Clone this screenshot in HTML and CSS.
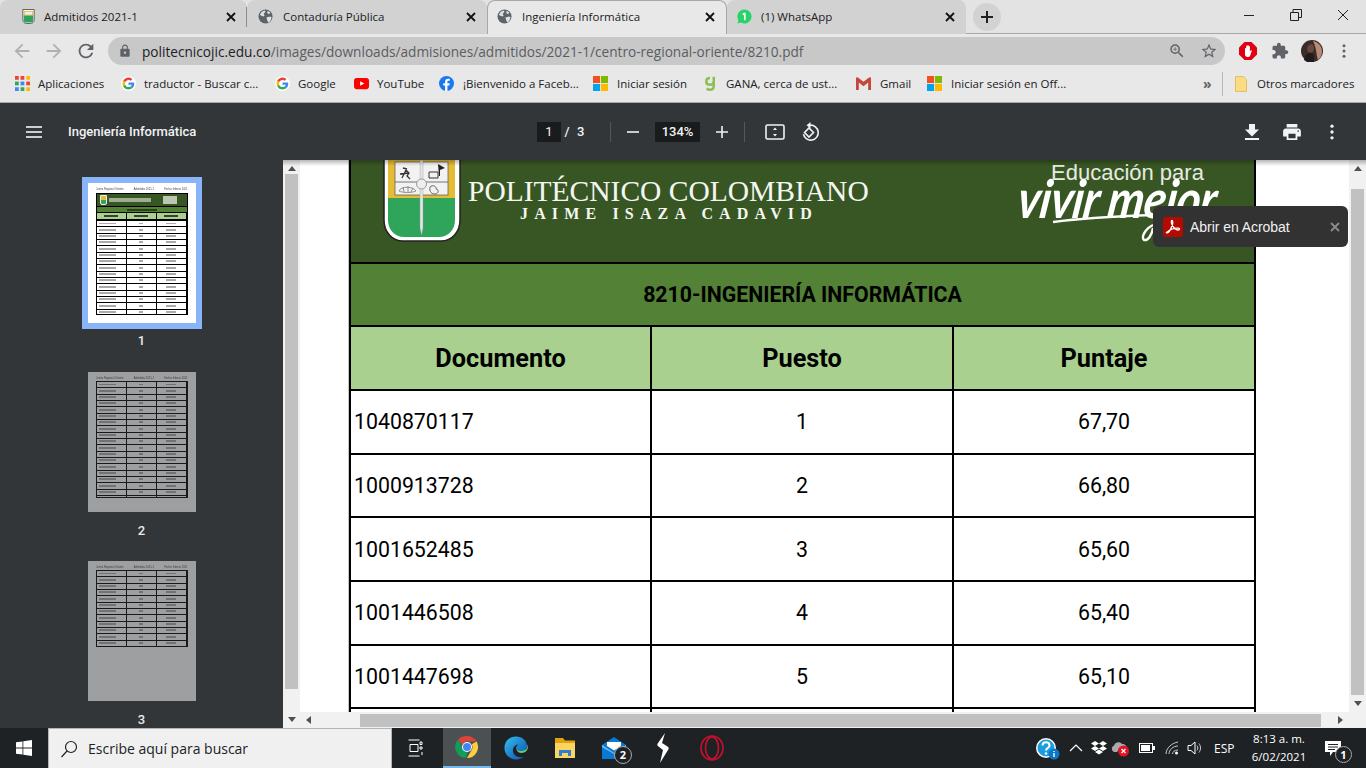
FILE: index.html
```html
<!DOCTYPE html>
<html lang="es">
<head>
<meta charset="UTF-8">
<title>Ingeniería Informática</title>
<link rel="stylesheet" href="styles.css">
</head>
<body>

<svg class="defs" width="0" height="0">
  <symbol id="globe" viewBox="0 0 16 16">
    <circle cx="8" cy="8" r="7.5" fill="#5f6368"/>
    <path fill="#dfe1e5" d="M2 6l2-3 3-1.5 1 1.5-2 2 1 2-1 1-3-1zM9 9l4-1 1.5 1-1.5 4-2 1.500-1-2zM10 2l3 1.500-1 2-2-1z"/>
  </symbol>
  <symbol id="g" viewBox="-6 -6 60 60">
    <circle cx="24" cy="24" r="30" fill="#fff"/>
    <path fill="#EA4335" d="M24 9.500c3.540 0 6.710 1.220 9.210 3.600l6.850-6.850C35.900 2.380 30.470 0 24 0 14.620 0 6.510 5.380 2.560 13.220l7.980 6.190C12.430 13.720 17.740 9.500 24 9.500z"/>
    <path fill="#4285F4" d="M46.980 24.550c0-1.570-.15-3.090-.38-4.550H24v9.020h12.940c-.58 2.960-2.260 5.480-4.780 7.180l7.730 6c4.510-4.180 7.090-10.360 7.090-17.650z"/>
    <path fill="#FBBC05" d="M10.530 28.590c-.48-1.450-.76-2.990-.76-4.590s.27-3.140.76-4.590l-7.980-6.190C.92 16.460 0 20.120 0 24c0 3.880.92 7.540 2.560 10.780l7.970-6.190z"/>
    <path fill="#34A853" d="M24 48c6.480 0 11.930-2.130 15.890-5.810l-7.730-6c-2.150 1.450-4.920 2.300-8.160 2.300-6.260 0-11.570-4.220-13.470-9.910l-7.980 6.190C6.510 42.620 14.620 48 24 48z"/>
  </symbol>
  <symbol id="ms" viewBox="0 0 16 16">
    <rect width="7.500" height="7.500" fill="#f25022"/>
    <rect x="8.500" width="7.500" height="7.500" fill="#7fba00"/>
    <rect y="8.500" width="7.500" height="7.500" fill="#00a4ef"/>
    <rect x="8.500" y="8.500" width="7.500" height="7.500" fill="#ffb900"/>
  </symbol>
  <symbol id="vert" viewBox="0 0 24 24">
    <circle cx="12" cy="5" r="2"/><circle cx="12" cy="12" r="2"/><circle cx="12" cy="19" r="2"/>
  </symbol>
  <symbol id="cross" viewBox="0 0 10 10">
    <path d="M1 1l8 8M9 1l-8 8" fill="none" stroke="currentColor" stroke-width="1.800"/>
  </symbol>
</svg>

<div class="tabstrip">
  <div class="tab tab-first">
    <svg class="favicon" viewBox="0 0 16 16">
      <path fill="#fff" stroke="#555" d="M2 .5h12v11c0 2.500-2 4-4 4H6c-2 0-4-1.500-4-4z"/>
      <rect x="3" y="2" width="10" height="5" fill="#e3bb3a"/>
      <path fill="#2fa35a" d="M3 7h10v5c0 1.500-1 2.500-3 2.500H6c-2 0-3-1-3-2.500z"/>
      <rect x="4" y="3" width="8" height="3" fill="#eee"/>
    </svg>
    <span class="tab-title">Admitidos 2021-1</span>
    <svg class="tab-x"><use href="#cross"/></svg>
  </div>
  <div class="tab">
    <svg class="favicon"><use href="#globe"/></svg>
    <span class="tab-title">Contaduría Pública</span>
    <svg class="tab-x"><use href="#cross"/></svg>
  </div>
  <div class="tab tab-active">
    <svg class="favicon"><use href="#globe"/></svg>
    <span class="tab-title">Ingeniería Informática</span>
    <svg class="tab-x"><use href="#cross"/></svg>
  </div>
  <div class="tab tab-last">
    <svg class="favicon" viewBox="0 0 16 16">
      <path fill="#25d366" d="M8 .5a7.500 7.500 0 1 1-3.700 14L.5 15.500l1.100-3.600A7.500 7.500 0 0 1 8 .5z"/>
      <path fill="#fff" d="M7 4h2.200v8H7.400V6.100L6 6.600V5z"/>
    </svg>
    <span class="tab-title">(1) WhatsApp</span>
    <svg class="tab-x"><use href="#cross"/></svg>
  </div>
  <div class="newtab">
    <svg width="14" height="14" viewBox="0 0 14 14"><path d="M7 1v12M1 7h12" stroke="#202124" stroke-width="2"/></svg>
  </div>
  <div class="winctl">
    <svg width="12" height="12" viewBox="0 0 12 12"><path d="M1 6.500h10" stroke="#222"/></svg>
    <svg width="12" height="12" viewBox="0 0 12 12"><path d="M.5 3.500h8v8h-8zM3 3.500V.5h8.500v8H8.500" fill="none" stroke="#222"/></svg>
    <svg width="12" height="12" viewBox="0 0 12 12"><path d="M1 1l10 10M11 1L1 11" stroke="#222"/></svg>
  </div>
</div>

<div class="toolbar">
  <svg class="navicon dim" viewBox="0 0 24 24"><path d="M20 11H7.830l5.590-5.590L12 4l-8 8 8 8 1.410-1.410L7.830 13H20v-2z"/></svg>
  <svg class="navicon dim" viewBox="0 0 24 24"><path d="M12 4l-1.410 1.410L16.170 11H4v2h12.170l-5.580 5.590L12 20l8-8z"/></svg>
  <svg class="navicon" viewBox="0 0 24 24"><path d="M17.650 6.350C16.200 4.900 14.210 4 12 4c-4.420 0-7.990 3.580-7.990 8s3.570 8 7.990 8c3.730 0 6.840-2.550 7.730-6h-2.080c-.82 2.330-3.040 4-5.650 4-3.310 0-6-2.690-6-6s2.690-6 6-6c1.660 0 3.140.69 4.220 1.780L13 11h7V4l-2.350 2.350z"/></svg>
  <div class="omnibox">
    <svg class="lock" viewBox="0 0 24 24"><path d="M18 8h-1V6c0-2.760-2.240-5-5-5S7 3.240 7 6v2H6c-1.100 0-2 .9-2 2v10c0 1.100.9 2 2 2h12c1.100 0 2-.9 2-2V10c0-1.100-.9-2-2-2zm-6 9c-1.100 0-2-.9-2-2s.9-2 2-2 2 .9 2 2-.9 2-2 2zm3.100-9H8.900V6c0-1.710 1.390-3.100 3.100-3.100 1.710 0 3.100 1.390 3.100 3.100v2z"/></svg>
    <span class="url"><b>politecnicojic.edu.co</b>/images/downloads/admisiones/admitidos/2021-1/centro-regional-oriente/8210.pdf</span>
    <svg class="omni-icon" viewBox="0 0 24 24"><path d="M15.500 14h-.79l-.28-.27A6.470 6.470 0 0 0 16 9.500 6.500 6.500 0 1 0 9.500 16c1.610 0 3.090-.59 4.230-1.570l.27.28v.79l5 4.990L20.490 19l-4.990-5zm-6 0C7.010 14 5 11.990 5 9.500S7.010 5 9.500 5 14 7.010 14 9.500 11.990 14 9.500 14z"/><path d="M9 7h1v2h2v1h-2v2H9v-2H7V9h2z"/></svg>
    <svg class="omni-icon" viewBox="0 0 24 24"><path d="M22 9.240l-7.190-.62L12 2 9.190 8.630 2 9.240l5.460 4.730L5.820 21 12 17.270 18.180 21l-1.630-7.030L22 9.240zM12 15.400l-3.760 2.270 1-4.280-3.320-2.880 4.380-.38L12 6.100l1.710 4.040 4.380.38-3.320 2.880 1 4.280L12 15.400z"/></svg>
  </div>
  <svg class="ext ext-block" viewBox="0 0 18 18">
    <path fill="#e0000f" d="M5.500 0h7L18 5.500v7L12.500 18h-7L0 12.500v-7z"/>
    <path fill="#fff" d="M6 6.500c0-.8 1.200-.8 1.200 0V4.200c0-.9 1.200-.9 1.200 0V3.700c0-.9 1.300-.9 1.300 0v.8c0-.8 1.200-.8 1.200 0v5l.8-1c.6-.6 1.400 0 1 .7L11 14c-.4.600-1 1-1.800 1H8.500C7 15 6 14 6 12.500z"/>
  </svg>
  <svg class="ext ext-puzzle" viewBox="0 0 24 24"><path d="M20.500 11H19V7c0-1.100-.9-2-2-2h-4V3.500C13 2.120 11.880 1 10.500 1S8 2.120 8 3.500V5H4c-1.100 0-1.990.9-1.990 2v3.800H3.500c1.490 0 2.700 1.210 2.700 2.700s-1.210 2.700-2.700 2.700H2V20c0 1.100.9 2 2 2h3.800v-1.500c0-1.490 1.210-2.700 2.700-2.700 1.490 0 2.700 1.210 2.700 2.700V22H17c1.100 0 2-.9 2-2v-4h1.500c1.380 0 2.500-1.120 2.500-2.500S21.880 11 20.500 11z"/></svg>
  <svg class="ext ext-avatar" viewBox="0 0 22 22">
    <circle cx="11" cy="11" r="11" fill="#3c2c28"/>
    <path fill="#b98a78" d="M12 1c5 1 9 5 9 10s-2 7-4 9c-2-5-1-11-5-19z"/>
    <path fill="#6a4a40" d="M7 6c3-3 6-2 6 2s-2 5-4 5-4-4-2-7z"/>
    <path fill="#201a18" d="M3 20c1-6 5-8 8-7 2 1 2 5 2 9H6z"/>
  </svg>
  <svg class="ext ext-more"><use href="#vert"/></svg>
</div>

<div class="bookmarks">
  <div class="bm">
    <svg class="bm-icon" viewBox="0 0 14 14">
      <rect width="3.500" height="3.500" fill="#ea4335"/><rect x="5.200" width="3.500" height="3.500" fill="#ea4335"/><rect x="10.500" width="3.500" height="3.500" fill="#fbbc05"/>
      <rect y="5.200" width="3.500" height="3.500" fill="#34a853"/><rect x="5.200" y="5.200" width="3.500" height="3.500" fill="#4285f4"/><rect x="10.500" y="5.200" width="3.500" height="3.500" fill="#ea4335"/>
      <rect y="10.500" width="3.500" height="3.500" fill="#4285f4"/><rect x="5.200" y="10.500" width="3.500" height="3.500" fill="#34a853"/><rect x="10.500" y="10.500" width="3.500" height="3.500" fill="#fbbc05"/>
    </svg>
    <span>Aplicaciones</span>
  </div>
  <div class="bm"><svg class="bm-icon"><use href="#g"/></svg><span>traductor - Buscar c...</span></div>
  <div class="bm"><svg class="bm-icon"><use href="#g"/></svg><span>Google</span></div>
  <div class="bm">
    <svg class="bm-icon" viewBox="0 0 16 16"><rect y="2" width="16" height="12" rx="3" fill="#f00"/><path d="M6.500 5.500v5L11 8z" fill="#fff"/></svg>
    <span>YouTube</span>
  </div>
  <div class="bm bm-far">
    <svg class="bm-icon" viewBox="0 0 16 16"><circle cx="8" cy="8" r="8" fill="#1877f2"/><path fill="#fff" d="M9 16V10h2l.4-2.400H9V6.200c0-.8.3-1.200 1.200-1.200h1.300V3c-.5-.1-1.100-.2-1.800-.2-2 0-3.200 1.200-3.200 3.200v1.600H4.500V10h2v6z"/></svg>
    <span>¡Bienvenido a Faceb...</span>
  </div>
  <div class="bm bm-far"><svg class="bm-icon"><use href="#ms"/></svg><span>Iniciar sesión</span></div>
  <div class="bm bm-gana">
    <svg class="bm-icon" viewBox="0 0 14 18"><path d="M11.500 1v11c0 3-2 4.500-4.500 4.500-1.500 0-3-.5-4-1.500M7 2.500c-2.500 0-4.500 1.500-4.500 4s2 4 4.500 4 4.500-1.500 4.500-4" fill="none" stroke="#8cc152" stroke-width="3"/></svg>
    <span>GANA, cerca de ust...</span>
  </div>
  <div class="bm bm-far">
    <svg class="bm-icon" viewBox="0 0 16 14"><path fill="#c5463a" d="M0 1.500C0 .5 1.200 0 2 .6L8 5.200 14 .6c.8-.6 2-.1 2 .9V14h-3V6L8 9.800 3 6v8H0z"/></svg>
    <span>Gmail</span>
  </div>
  <div class="bm bm-far"><svg class="bm-icon"><use href="#ms"/></svg><span>Iniciar sesión en Off...</span></div>
  <div class="bm-more">»</div>
  <div class="bm bm-other">
    <svg class="bm-icon" viewBox="0 0 12 16"><path fill="#fbdc84" stroke="#e0c060" d="M.5.5h8l3 3v12H.5z"/></svg>
    <span>Otros marcadores</span>
  </div>
</div>

<div class="pdfbar">
  <svg class="pdf-menu" viewBox="0 0 16 12"><path d="M0 1h16M0 6h16M0 11h16" stroke="#fff" stroke-width="1.600"/></svg>
  <span class="pdf-title">Ingeniería Informática</span>
  <span class="pdf-box pdf-page">1</span>
  <span class="pdf-sep-text">/</span>
  <span class="pdf-total">3</span>
  <span class="pdf-div pdf-div-a"></span>
  <svg class="pdf-minus" viewBox="0 0 12 12"><path d="M0 6h12" stroke="#f1f3f4" stroke-width="1.600"/></svg>
  <span class="pdf-box pdf-zoom">134%</span>
  <svg class="pdf-plus" viewBox="0 0 12 12"><path d="M0 6h12M6 0v12" stroke="#f1f3f4" stroke-width="1.600"/></svg>
  <span class="pdf-div pdf-div-b"></span>
  <svg class="pdf-fit" viewBox="0 0 20 16">
    <rect x="1" y="1" width="18" height="14" rx="1.500" fill="none" stroke="#f1f3f4" stroke-width="1.600"/>
    <path fill="#f1f3f4" d="M10 3.500l2 2.500H8zM10 12.500L8 10h4z"/>
  </svg>
  <svg class="pdf-rotate" viewBox="0 0 20 20">
    <path d="M9 3.200a7.500 7.500 0 1 1-6.600 9" fill="none" stroke="#f1f3f4" stroke-width="1.600"/>
    <path fill="#f1f3f4" d="M9.500 0v6.400L5.500 3.200z"/>
    <path d="M3.500 10.500l4.500-4.500 4.500 4.500-4.500 4.500z" fill="none" stroke="#f1f3f4" stroke-width="1.600"/>
  </svg>
  <svg class="pdf-download" viewBox="0 0 14 16"><path fill="#f1f3f4" d="M14 5.500h-4V0H4v5.500H0L7 12.500zM0 14v2h14v-2z"/></svg>
  <svg class="pdf-print" viewBox="2 3 20 18"><path fill="#f1f3f4" d="M19 8H5c-1.660 0-3 1.340-3 3v6h4v4h12v-4h4v-6c0-1.660-1.340-3-3-3zm-3 11H8v-5h8v5zm3-7c-.55 0-1-.45-1-1s.45-1 1-1 1 .45 1 1-.45 1-1 1zm-1-9H6v4h12V3z"/></svg>
  <svg class="pdf-more"><use href="#vert"/></svg>
</div>

<div class="viewer">
  <aside class="sidebar">
    <div class="thumb thumb-on">
      <div class="minipage">
        <div class="mini-head"><span>Centro Regional Oriente</span><span>Admitidos 2021-1</span><span>Fecha: febrero 2021</span></div>
        <div class="mini-banner">
          <i class="mini-crest"></i><i class="mini-name"></i><i class="mini-slogan"></i>
        </div>
        <div class="mini-title"></div>
        <div class="mini-cols"><i></i><i></i><i></i></div>
        <div class="mini-rows mini-rows-15"></div>
      </div>
    </div>
    <div class="thumb-num">1</div>
    <div class="thumb">
      <div class="minipage minipage-dim">
        <div class="mini-head"><span>Centro Regional Oriente</span><span>Admitidos 2021-1</span><span>Fecha: febrero 2021</span></div>
        <div class="mini-rows mini-rows-18"></div>
      </div>
    </div>
    <div class="thumb-num">2</div>
    <div class="thumb">
      <div class="minipage minipage-dim">
        <div class="mini-head"><span>Centro Regional Oriente</span><span>Admitidos 2021-1</span><span>Fecha: febrero 2021</span></div>
        <div class="mini-rows mini-rows-12"></div>
      </div>
    </div>
    <div class="thumb-num">3</div>
  </aside>

  <div class="scrollbar-v scrollbar-side">
    <i class="arrow arrow-up"></i>
    <div class="thumb-v"></div>
    <i class="arrow arrow-down"></i>
  </div>

  <main class="docarea">
    <div class="docview">
      <table class="sheet">
        <colgroup><col class="c1"><col class="c2"><col class="c3"></colgroup>
        <tr class="row-banner">
          <td colspan="3">
            <div class="banner">
              <svg class="crest" viewBox="0 0 78 82">
                <path fill="#fff" stroke="#222" stroke-width="1.500" d="M1-2h76v62c0 12-8 21-19 21H20C9 81 1 72 1 60z"/>
                <rect x="5" y="0" width="67" height="38" fill="#e6bb36"/>
                <path fill="#2ea55a" d="M5 38h67v22c0 10-7 17-16 17H21C12 77 5 70 5 60z"/>
                <rect x="12" y="2" width="53" height="33" fill="#f2f2f2" stroke="#555" stroke-width=".7"/>
                <path d="M12 22h53" stroke="#555" stroke-width=".8"/>
                <path d="M37 0h3v68l-1.500 7-1.500-7z" fill="#e4e4e4" stroke="#999" stroke-width=".4"/>
                <circle cx="38.500" cy="24" r="5" fill="#eee" stroke="#999"/>
                <path d="M19 18l4-8 3 3-2 3 3 3M17 14l9-1M20 8l4 1" fill="none" stroke="#333" stroke-width="1.300"/>
                <path d="M46 12h9v6h-9z" fill="none" stroke="#333"/>
                <path d="M55 4l7 4-5 2v6h-1z" fill="#222"/>
                <path d="M16 31c2-5 14-5 17 0-4 2-13 2-17 0zM20 27l1 5M25 26v6M30 28l-2 4" fill="none" stroke="#777" stroke-width=".8"/>
                <path d="M47 27c3-3 7 0 6 2 3 0 3 5-1 5-3 0-6-2-5-7z" fill="none" stroke="#666"/>
              </svg>
              <div class="wordmark">
                <div class="wm-top">POLITÉCNICO COLOMBIANO</div>
                <div class="wm-sub">JAIME ISAZA CADAVID</div>
              </div>
              <div class="slogan">
                <div class="sl-top">Educación para</div>
                <div class="sl-script">vivir mejor</div>
                <svg class="sl-swash" viewBox="0 0 110 28"><path d="M0 8C30 4 70 2 100 1M100 11c-8 4-12 12-9 15 4 1 8-5 9-12" fill="none" stroke="#fff" stroke-width="2.400"/></svg>
              </div>
            </div>
          </td>
        </tr>
        <tr class="row-title"><td colspan="3">8210-INGENIERÍA INFORMÁTICA</td></tr>
        <tr class="row-head"><th>Documento</th><th>Puesto</th><th>Puntaje</th></tr>
        <tr><td class="doc">1040870117</td><td>1</td><td>67,70</td></tr>
        <tr><td class="doc">1000913728</td><td>2</td><td>66,80</td></tr>
        <tr><td class="doc">1001652485</td><td>3</td><td>65,60</td></tr>
        <tr><td class="doc">1001446508</td><td>4</td><td>65,40</td></tr>
        <tr><td class="doc">1001447698</td><td>5</td><td>65,10</td></tr>
        <tr><td></td><td></td><td></td></tr>
      </table>
    </div>
    <div class="scrollbar-v scrollbar-main">
      <i class="arrow arrow-up"></i>
      <div class="thumb-v"></div>
      <i class="arrow arrow-down"></i>
    </div>
    <div class="scrollbar-h">
      <i class="arrow arrow-left"></i>
      <div class="thumb-h"></div>
      <i class="arrow arrow-right"></i>
    </div>
    <div class="corner"></div>
    <div class="acrobat">
      <svg class="acrobat-logo" viewBox="0 0 20 20">
        <rect width="20" height="20" rx="3" fill="#b30b00"/>
        <path d="M3.500 15.500c1.500 1.500 4-2 6-8 .5-2 .3-4-.5-4s-1 2 0 4c1.500 3 4 5.500 6 5.500s2-1.500.5-1.800c-3-.5-8 1-12 4.300z" fill="none" stroke="#fff" stroke-width="1.300"/>
      </svg>
      <span class="acrobat-text">Abrir en Acrobat</span>
      <svg class="acrobat-x"><use href="#cross"/></svg>
    </div>
  </main>
  <div class="topshade"></div>
</div>

<footer class="taskbar">
  <div class="start">
    <svg width="16" height="16" viewBox="0 0 16 16"><path fill="#fff" d="M0 2.300l6.500-.9v6.200H0zM7.300 1.300L16 0v7.600H7.300zM0 8.400h6.500v6.200L0 13.700zM7.300 8.400H16V16l-8.700-1.300z"/></svg>
  </div>
  <div class="search">
    <svg width="18" height="18" viewBox="0 0 18 18"><circle cx="11" cy="7" r="5.500" fill="none" stroke="#222" stroke-width="1.200"/><path d="M7 11l-5.500 6" stroke="#222" stroke-width="1.200"/></svg>
    <span>Escribe aquí para buscar</span>
  </div>
  <div class="task task-view">
    <svg width="16" height="18" viewBox="0 0 16 18"><path d="M.5 1h11M.5 17h11M2 5.500h8v7H2zM14 3v2.500h-2V3zM14 8v2h-2V8zM14 13v3" fill="none" stroke="#fff"/></svg>
  </div>
  <div class="task task-on">
    <svg width="24" height="24" viewBox="0 0 24 24">
      <path fill="#db4437" d="M12 1a11 11 0 0 1 9.530 5.500H12a5.500 5.500 0 0 0-5.100 3.500L3 4.600A11 11 0 0 1 12 1z"/>
      <path fill="#ffcd40" d="M21.530 6.500A11 11 0 0 1 12 23l4.760-8.250A5.500 5.500 0 0 0 16.760 9.250z"/>
      <path fill="#0f9d58" d="M3 4.600L7.500 12.500a5.500 5.500 0 0 0 6 2.800L10.700 22.900A11 11 0 0 1 3 4.600z"/>
      <circle cx="12" cy="12" r="5" fill="#fff"/><circle cx="12" cy="12" r="4" fill="#4285f4"/>
    </svg>
  </div>
  <div class="task">
    <svg width="24" height="24" viewBox="0 0 24 24">
      <defs><linearGradient id="edge" x1="0" y1="0" x2="1" y2="1"><stop offset="0" stop-color="#35c1f1"/><stop offset=".6" stop-color="#1b79c9"/><stop offset="1" stop-color="#0c59a4"/></linearGradient></defs>
      <path fill="url(#edge)" d="M12 .5C5.500.5.500 5.500.5 12c0 6.500 5 11.500 11.500 11.500 3 0 5.800-1 7.800-2.800-2 .8-5 .9-7.300-.4-2.500-1.400-4-4-3.500-7 .5-3 3-4.800 6-4.800-2 .5-3 2-3 3.500 0 2 2 3.500 5 3.500 3 0 6-1.500 6-5C23 4.500 18 .5 12 .5z"/>
      <path fill="#5ed16f" d="M23.300 8.500c.6 4-1.200 6-5.800 6.500-2 .2-4-.5-5-1.800.3 2 2 3.700 5 3.700 3.500 0 6.500-3 6.500-6 0-1-.2-1.700-.7-2.400z"/>
    </svg>
  </div>
  <div class="task">
    <svg width="22" height="22" viewBox="0 0 22 22">
      <path fill="#e2a30e" d="M1 1h8l2 2.500h10V21H1z"/>
      <rect x="1" y="6" width="20" height="15" fill="#fcd462"/>
      <path fill="#2d7fd3" d="M5 13h12v6h-3v-3H8v3H5z"/>
    </svg>
  </div>
  <div class="task task-badge">
    <svg width="24" height="22" viewBox="0 0 24 22">
      <path fill="#0a78d4" d="M0 8L12 0l12 8v14H0z"/>
      <path fill="#7cc3f3" d="M0 8l12 8 12-8v2L12 17 0 10z"/>
      <path fill="#fff" d="M5 5h14v4l-7 4.500L5 9z"/>
    </svg>
    <span class="badge">2</span>
  </div>
  <div class="task">
    <svg width="14" height="30" viewBox="0 0 14 30"><path fill="#fff" d="M9 0L2 10c-1 1.500-1 2.500.5 3.500L7 17 4 30l8-13c1-1.500 1-2.500-.5-3.500L6 10z"/></svg>
  </div>
  <div class="task">
    <svg width="24" height="26" viewBox="0 0 24 26"><ellipse cx="12" cy="13" rx="11" ry="12" fill="none" stroke="#c8102e" stroke-width="1.600"/><ellipse cx="12" cy="13" rx="6.500" ry="11" fill="none" stroke="#c8102e" stroke-width="1.600"/></svg>
  </div>

  <div class="tray">
    <div class="tray-help">
      <svg width="30" height="24" viewBox="0 0 30 24">
        <circle cx="12" cy="12" r="10" fill="#fff"/><circle cx="12" cy="12" r="8.500" fill="#1b9ddf"/>
        <path d="M8.500 9.500c0-4.500 7-4.500 7 0 0 2.500-3.500 2.500-3.500 5" fill="none" stroke="#fff" stroke-width="2"/><circle cx="12" cy="17.500" r="1.200" fill="#fff"/>
        <circle cx="20" cy="18" r="5.500" fill="#0a77c8"/><path d="M20 17v4M20 15v1" stroke="#fff" stroke-width="1.400"/>
      </svg>
    </div>
    <svg class="tray-chev" width="14" height="8" viewBox="0 0 14 8"><path d="M1 7l6-6 6 6" fill="none" stroke="#fff" stroke-width="1.200"/></svg>
    <svg class="tray-drop" width="16" height="14" viewBox="0 0 16 14"><path fill="#fff" d="M4 0L0 2.500 4 5l4-2.500zM12 0L8 2.500 12 5l4-2.500zM0 7.500L4 10l4-2.500L4 5zM12 5L8 7.500l4 2.500 4-2.500zM4 11l4 2.500 4-2.500-4-2.500z"/></svg>
    <svg class="tray-cloud" width="20" height="17" viewBox="0 0 20 17">
      <path fill="#aaa" d="M4 12a3.500 3.500 0 0 1 0-6.500C5 2 10 1 12 4c3 0 5 2 5 5H9l-2 3z"/>
      <circle cx="13.500" cy="11" r="5.500" fill="#e81123"/><path d="M11.500 9l4 4M15.500 9l-4 4" stroke="#fff" stroke-width="1.300"/>
    </svg>
    <svg class="tray-batt" width="16" height="10" viewBox="0 0 16 10"><rect x=".5" y=".5" width="13" height="9" fill="none" stroke="#fff"/><rect x="2" y="2" width="9" height="6" fill="#fff"/><rect x="14" y="3" width="2" height="4" fill="#fff"/></svg>
    <svg class="tray-wifi" width="14" height="14" viewBox="0 0 14 14"><path d="M1 13C1 7 7 2 13 1M4 13c0-4 4-8 9-8M7.500 13c0-2 2-4 5.500-4" fill="none" stroke="#ccc"/><circle cx="11.500" cy="12" r="1.500" fill="#fff"/></svg>
    <svg class="tray-vol" width="16" height="14" viewBox="0 0 16 14"><path d="M1 4.500h3L8 1v12L4 9.500H1z" fill="none" stroke="#fff"/><path d="M10 4.500c1 1.500 1 3.500 0 5M12 2.500c2 3 2 6 0 9" fill="none" stroke="#ccc"/></svg>
    <span class="tray-lang">ESP</span>
    <div class="clock"><span>8:13 a. m.</span><span>6/02/2021</span></div>
    <div class="notif">
      <svg width="16" height="15" viewBox="0 0 16 15"><path fill="#fff" d="M0 0h16v11H8l-3 4v-4H0z"/><path d="M3 3.500h10M3 6h10M3 8.500h7" stroke="#1e2225"/></svg>
      <span class="badge badge-notif">1</span>
    </div>
  </div>
</footer>

</body>
</html>
```

FILE: styles.css
```css
*{box-sizing:border-box}
html,body{margin:0;height:768px;overflow:hidden}
body{width:1366px;display:flex;flex-direction:column;font-family:"Open Sans","Noto Sans",sans-serif;color:#202124;background:#323639}
.defs{position:absolute}
svg{display:block;flex:none}

/* tabs */
.tabstrip{height:34px;flex:none;display:flex;background:#e3e3e3;border-bottom:1px solid #a8a8a8}
.tab{width:240px;height:34px;display:flex;align-items:center;padding:0 11px 1px 11px;background:#d2d2d2;border-radius:8px 8px 0 0;font-size:11.5px;position:relative}
.tab-first{width:247px;padding-left:21px}
.tab-first .favicon{margin-right:8px}
.tab-first::after{content:"";position:absolute;right:0;top:7px;height:20px;width:1px;background:#8c8c8c}
.tab-last{width:239px;padding-left:10px}
.tab-last .favicon{margin-right:9px}
.tab-active{background:#e8e8e8;border:1px solid #a8a8a8;border-bottom:none;z-index:1;padding:0 11px 2px 9px}
.favicon{width:15px;height:15px;margin-right:10px}
.tab-title{flex:1;white-space:nowrap}
.tab-x{width:10px;height:10px;color:#111}
.newtab{width:28px;height:28px;margin:3px 0 0 7px;border-radius:50%;background:#d2d2d2;display:flex;align-items:center;justify-content:center}
.winctl{margin-left:auto;display:flex;gap:35px;padding:9px 17px 0 0}

/* toolbar */
.toolbar{height:34px;flex:none;display:flex;align-items:center;background:#e8e8e8;padding:0 0 0 11px}
.navicon{width:22px;height:22px;margin-right:10px;fill:#5f6368}
.navicon.dim{fill:#aeb0b2}
.omnibox{width:1117px;height:28px;margin-left:1px;border-radius:14px;background:#c8c8c8;display:flex;align-items:center;padding:0 7px 0 10px}
.lock{width:14px;height:14px;fill:#5f6368;margin-right:10px}
.url{flex:1;font-size:13.650px;color:#5a5d61;white-space:nowrap}
.url b{font-weight:400;color:#202124}
.omni-icon{width:18px;height:18px;fill:#5f6368;margin-left:14px}
.ext{width:18px;height:18px}
.ext-block{margin-left:14px}
.ext-puzzle{margin-left:14px;fill:#5f6368}
.ext-avatar{width:22px;height:22px;margin-left:12px}
.ext-more{margin-left:12px;fill:#5f6368}

/* bookmarks */
.bookmarks{height:35px;flex:none;display:grid;grid-template-columns:106px 154px 79px 85px 154px 111px 152px 71px 274px 21px 1fr;align-items:center;background:#e8e8e8;border-bottom:1px solid #a8a8a8;padding:0 0 3px 15px;font-size:11.5px}
.bm{display:flex;align-items:center;white-space:nowrap}
.bm-icon{width:15px;height:15px;margin-right:8px}
.bm-far .bm-icon{margin-right:9px}
.bm-gana .bm-icon{width:12px;height:15px;margin-right:10px}
.bm-more{color:#5f6368;font-size:14px;font-weight:700;padding-left:2px}
.bm-other{border-left:1px solid #b8b8b8;height:24px;padding-left:12px}
.bm-other .bm-icon{width:12px;height:16px;margin-right:10px}

/* pdf toolbar */
.pdfbar{height:57px;flex:none;display:flex;align-items:center;background:#323639;color:#f1f3f4;font-family:Roboto,sans-serif;font-size:13px;position:relative;z-index:2}
.pdf-menu{width:16px;height:12px;margin-left:26px}
.pdf-title{width:469px;margin-left:26px;font-weight:500;white-space:nowrap}
.pdf-box{height:20px;line-height:20px;background:#191b1c;text-align:center}
.pdf-page{width:24px}
.pdf-sep-text{width:12px;text-align:center;font-weight:500}
.pdf-total{width:9px;margin-left:4px;font-weight:500}
.pdf-div{width:1px;height:20px;background:#55585b}
.pdf-div-a{margin-left:24px}
.pdf-minus{width:12px;height:12px;margin-left:16px}
.pdf-zoom{width:45px;margin-left:16px;font-weight:500}
.pdf-plus{width:12px;height:12px;margin-left:16px}
.pdf-div-b{margin-left:16px}
.pdf-fit{width:20px;height:16px;margin-left:20px}
.pdf-rotate{width:20px;height:20px;margin-left:16px}
.pdf-download{width:14px;height:16px;margin-left:424px}
.pdf-print{width:18px;height:16px;margin-left:24px}
.pdf-more{width:20px;height:20px;margin-left:21px;fill:#f1f3f4}

/* viewer */
.viewer{height:568px;flex:none;display:flex;position:relative;overflow:hidden}
.topshade{position:absolute;left:283px;right:0;top:0;height:6px;background:linear-gradient(rgba(0,0,0,.28),rgba(0,0,0,0))}
.sidebar{width:283px;flex:none;background:#323639;padding-top:17px;display:flex;flex-direction:column;align-items:center;overflow:hidden}
.thumb{width:120px;height:152px;flex:none;border:6px solid transparent}
.thumb-on{border-color:#8ab4f8}
.thumb-num{height:20px;margin:3px 0 14px;color:#e8eaed;font:500 13px/20px Roboto,sans-serif;flex:none}
.thumb-on + .thumb-num{margin:2px 0 15px}
.minipage{width:108px;height:140px;background:#fff;padding:4px 8px 0}
.minipage > *{filter:blur(.35px)}
.minipage-dim{opacity:.52}
.mini-head{height:5px;display:flex;justify-content:space-between;font:2.600px/5px "Liberation Sans",sans-serif;color:#444;white-space:nowrap;overflow:hidden}
.mini-banner{height:14px;margin-top:1px;background:#385623;border:1px solid #000;display:flex;align-items:center;padding-left:3px}
.mini-crest{width:7px;height:10px;background:linear-gradient(#e6bb36 45%,#2ea55a 45%);border:1px solid #eee;border-radius:0 0 2px 2px}
.mini-name{width:42px;height:4px;margin-left:2px;background:#9fae93}
.mini-slogan{width:14px;height:8px;margin-left:12px;background:#bcc7b2}
.mini-title{height:6px;background:#538135 linear-gradient(#2c3f1c,#2c3f1c) center/30px 2px no-repeat;border:1px solid #000;border-top:none}
.mini-cols{height:7px;display:grid;grid-template-columns:30px 30px 1fr;background:#a9d08e;border:1px solid #000;border-top:none}
.mini-cols i{border-right:1px solid #000;background:linear-gradient(#34452a,#34452a) center/14px 2px no-repeat}
.mini-rows{border:solid #000;border-width:0 1px 1px 0;background-color:#fff;background-image:
  repeating-linear-gradient(90deg,#000 0 1px,transparent 1px 30px),
  repeating-linear-gradient(#000 0 1px,transparent 1px 6.330px),
  linear-gradient(90deg,#fff 0 3px,transparent 3px 20px,#fff 20px 43px,transparent 43px 47px,#fff 47px 70px,transparent 70px 80px,#fff 80px),
  repeating-linear-gradient(transparent 0 2.500px,#aaa 2.500px 4.300px,transparent 4.300px 6.330px)}
.mini-rows-15{height:95px}
.mini-rows-18{height:117px}
.mini-rows-12{height:77px}

/* scrollbars */
.scrollbar-v{background:#f1f1f1;display:flex;flex-direction:column;align-items:center}
.scrollbar-side{width:17px;flex:none}
.thumb-v{width:13px;background:#c1c1c1}
.scrollbar-side .thumb-v{height:515px;margin-top:3px}
.scrollbar-main{grid-column:2;grid-row:1}
.scrollbar-main .thumb-v{height:506px;margin-top:18px}
.arrow{display:block;flex:none;width:0;height:0;border-style:solid;border-color:transparent}
.arrow-up{margin-top:6px;border-width:0 4.500px 5px;border-bottom-color:#505050}
.arrow-down{margin-top:auto;margin-bottom:6px;border-width:5px 4.500px 0;border-top-color:#505050}
.arrow-left{margin-left:6px;border-width:4.500px 5px 4.500px 0;border-right-color:#505050}
.arrow-right{margin:0 6px 0 auto;border-width:4.500px 0 4.500px 5px;border-left-color:#505050}
.scrollbar-h{grid-column:1;grid-row:2;background:#f1f1f1;display:flex;align-items:center}
.thumb-h{width:961px;height:13px;margin-left:49px;background:#c1c1c1}
.corner{grid-column:2;grid-row:2;background:#f1f1f1}

/* document */
.docarea{flex:1;display:grid;grid-template-columns:1049px 17px;grid-template-rows:552px 16px;position:relative;background:#fff}
.docview{overflow:hidden;padding-left:49px;grid-column:1;grid-row:1}
.sheet{width:905px;table-layout:fixed;border-collapse:collapse;font-family:Roboto,sans-serif;color:#000;box-shadow:-1px 0 0 #c4c4c4}
.c1{width:301px}
.c2{width:302px}
.c3{width:302px}
.sheet td,.sheet th{border:2px solid #000;text-align:center;padding:0;font-size:21.300px;font-weight:400;height:63.700px}
.sheet td.doc{text-align:left;padding-left:3px}
.sheet .row-banner td{height:103px;background:#385623;border-top:none}
.sheet .row-title td{height:63px;background:#538135;font-size:21.300px;font-weight:700}
.sheet .row-head th{height:64px;background:#a9d08e;font-size:25.300px;font-weight:700}

.banner{height:102px;display:flex;overflow:hidden;text-align:left}
.crest{width:78px;height:82px;margin-left:32px}
.wordmark{width:400px;margin-left:7px;padding-top:15px;color:#f4f6f1;font-family:"Liberation Serif",serif}
.wm-top{font-size:29.500px;line-height:32px;white-space:nowrap}
.wm-sub{font-size:16px;line-height:14px;font-weight:700;letter-spacing:6.150px;margin-left:52px;white-space:nowrap}
.slogan{position:relative;margin-left:152px;color:#fff}
.sl-top{font:22px/26px "Liberation Sans",sans-serif;margin-left:31px;color:#e6ebe2;white-space:nowrap}
.sl-script{font:italic 700 46px/32px Lato,sans-serif;letter-spacing:-.5px;white-space:nowrap;transform-origin:0 100%;transform:translate(-4px,-1.500px) skewX(-8deg) scaleY(1.15)}
.sl-swash{position:absolute;left:33px;top:54px;width:110px;height:28px}

/* acrobat popup */
.acrobat{position:absolute;left:853px;top:46px;width:195px;height:41px;border-radius:6px;background:#323232;color:#f0f0f0;display:flex;align-items:center;padding:0 8px 0 10px;font:14px "Liberation Sans",sans-serif}
.acrobat-logo{width:20px;height:20px}
.acrobat-text{margin-left:7px;flex:1;white-space:nowrap;letter-spacing:-.05px}
.acrobat-x{width:10px;height:10px;color:#8c8c8c}

/* taskbar */
.taskbar{height:40px;flex:none;display:flex;background:#1e2225;color:#fff;position:relative;z-index:2}
.start{width:48px;display:flex;align-items:center;justify-content:center}
.search{width:344px;display:flex;align-items:center;background:#f0f0f0;border:1px solid #b4b4b4;border-bottom:none;color:#222;font-size:14px;padding-left:11px}
.search span{margin-left:10px;white-space:nowrap}
.task{width:49px;display:flex;align-items:center;justify-content:center;position:relative}
.task-view{width:51px;padding-right:3px}
.task-on{width:48px;background:#4b5053;border-bottom:2px solid #76b9ed}
.badge{position:absolute;left:25px;top:18px;width:18px;height:18px;border-radius:50%;background:#1e2225;border:1px solid #aaa;color:#fff;font-size:11px;font-weight:700;line-height:16px;text-align:center}
.tray{margin-left:auto;display:flex;align-items:center;font-size:12px}
.tray-help{margin-right:5px}
.tray-chev{margin-right:8px}
.tray-drop{margin-right:3px}
.tray-cloud{margin-right:9px}
.tray-batt{margin-right:10px}
.tray-wifi{margin-right:8px}
.tray-vol{margin-right:11px}
.tray-lang{width:22px;margin-right:13px}
.clock{width:60px;display:flex;flex-direction:column;align-items:center;line-height:18px;font-size:11.500px;white-space:nowrap}
.notif{width:57px;height:40px;display:flex;align-items:center;justify-content:center;position:relative;padding-right:10px}
.badge-notif{left:26px;top:18px;width:17px;height:17px;line-height:15px}
```
